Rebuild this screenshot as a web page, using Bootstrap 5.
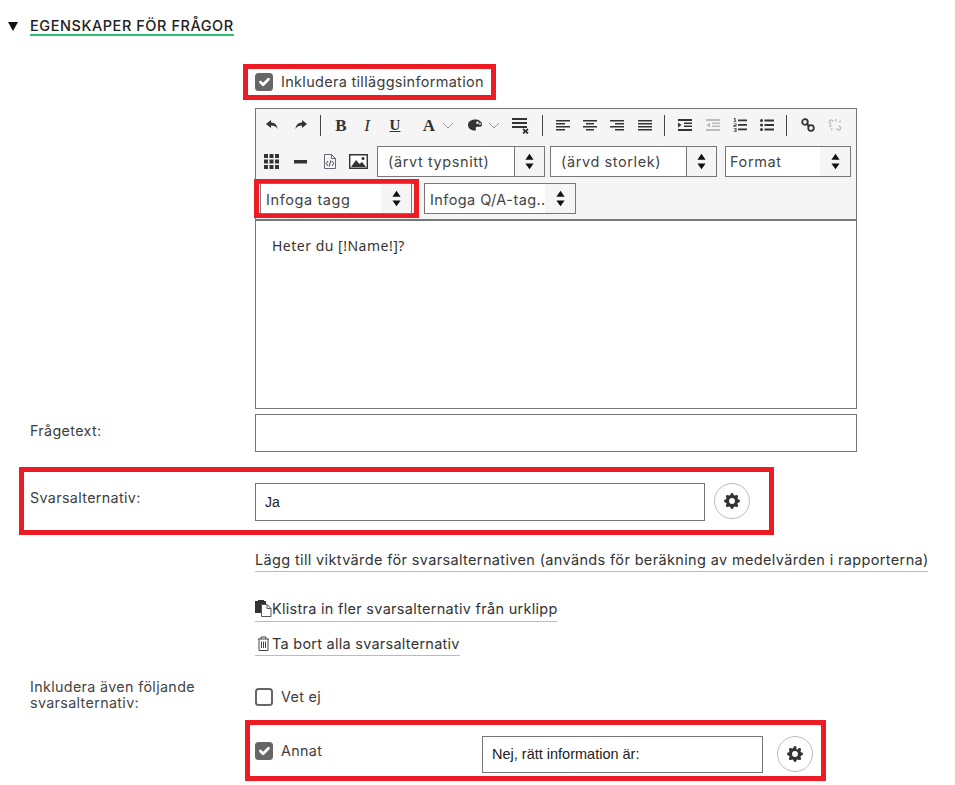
<!doctype html>
<html lang="sv">
<head>
<meta charset="utf-8">
<title>Egenskaper för frågor</title>
<link href="https://cdn.jsdelivr.net/npm/bootstrap@5.3.0/dist/css/bootstrap.min.css" rel="stylesheet">
<style>
body{font-family:Inter,"Noto Sans","Liberation Sans",sans-serif;font-size:14.3px;letter-spacing:.35px;color:#3d3d3d;background:#fff;margin:0;overflow:hidden}
.pg{width:955px;height:785px;position:relative}
.hd{padding:19px 0 0 8px;height:64px}
.tri{width:0;height:0;border-left:5px solid transparent;border-right:5px solid transparent;border-top:9px solid #111;margin:3px 12px 0 0}
.hd-t{font-size:14.5px;font-weight:500;color:#222;border-bottom:2px solid #2fbf71;line-height:14px;height:17px;letter-spacing:.55px}
.fr{border:5px solid #ed1c24}
.f1{margin-left:243px;width:253px;height:36px;padding-left:7px}
.f1 .txl{font-size:14.5px;letter-spacing:.3px}
.ck{width:18px;height:18px;margin:0 8px 0 0!important;border:2px solid #666;border-radius:2px;flex:none;background-size:18px}
.ck:checked{background-color:#666;border-color:#666}
.ck:focus{box-shadow:none;border-color:#666}
.edw{margin:8px 0 0 255px;width:602px}
.tbar{height:112px;border:1px solid #777;background:#f5f5f5}
.tr1{height:32px;padding-left:1px}
.ti{width:27.4px;height:30px;flex:none}
.ti.wd{width:29px}
.ti.n{width:26px}
.ti.u2{margin-left:2px}
.ti.c{width:12px}
.tsep{width:1px;height:21px;background:#444;margin:0 7px 0 5px;flex:none}
.tsep.ts2{margin:0 6px 0 8px}
.tg{font-family:"Liberation Serif",serif;font-size:17px;font-weight:700;color:#333;line-height:1;letter-spacing:0}
.tgi{font-style:italic;font-weight:400}
.tgu{text-decoration:underline;font-size:15px}
.tr2{height:41px;padding-left:1px}
.sel{height:31px;border:1px solid #777;background:#fff;font-size:14.5px;color:#444;letter-spacing:.6px;font-weight:400}
.sel .tx{padding-left:10px;flex:1 1 auto;white-space:nowrap;overflow:hidden}
.sel .tx.tag{padding-left:5px;padding-top:2px}
.arr{width:30px;height:100%;background:#f5f5f5;flex:none}
.arr.dv{border-left:1px solid #777}
.s1{width:168px;margin-left:4px}
.s2{width:167px;margin-left:5px}
.s3{width:126px;margin-left:8px}
.s4{width:152px;flex:none}
.s5{width:152px;margin-left:5px;letter-spacing:.42px}
.s4f{width:165px;height:39px;padding:3px 1px;margin:-3px 0 0 -2px}
.s5b{margin-top:-3px}
.edt{height:189px;border:1px solid #777;padding:14px 16px;font-size:14px;letter-spacing:.5px;color:#333;font-family:"Noto Sans","Liberation Sans",sans-serif}
.rw{display:flex}
.lb{width:255px;padding-left:30px;flex:none}
.inp{height:38px;border:1px solid #777;background:#fff;font-family:"Liberation Sans",sans-serif;font-size:14px;letter-spacing:0;color:#222;padding:0 9px;border-radius:0}
.r-q{margin-top:5px;height:38px}
.r-q .lb{padding-top:6px}
.r-q .inp{width:602px}
.f2{margin:15px 0 0 19px;width:755px;height:68px;padding-top:11px}
.f2 .lb{width:231px;padding-left:6px;padding-top:4px}
.f2 .inp{width:450px}
.gb{width:36px;height:36px;border:1px solid #bbb;border-radius:50%;background:#fff;margin-left:9px;flex:none}
.lnk{margin-left:255px;font-size:14.5px;font-weight:400;color:#333;border-bottom:1px solid #bbb;line-height:18px;white-space:nowrap;display:flex;align-items:center;letter-spacing:.355px}
.lnk svg{flex:none}
.l1{margin-top:16px;width:673px;height:21px;padding-bottom:2px}
.l2{margin-top:26px;width:302px;height:24px;padding-bottom:2px;letter-spacing:.28px}
.l3{margin-top:11px;width:205px;height:23px;padding-bottom:1px;letter-spacing:.25px}
.r-v{margin-top:23px;height:41px}
.r-v .lb{line-height:16px;color:#444}
.r-v .cw{padding-top:9px}
.f3{margin:0 0 0 245px;width:581px;height:61px;padding:0 0 0 5px}
.ann{width:227px}
.f3 .inp{width:281px;height:37px;margin-top:11px;font-size:14.5px;padding:0 9px}
.f3 .gb{margin-left:14px;margin-top:11px}
.txl{line-height:18px}
</style>
</head>
<body>
<div class="pg">
  <div class="hd d-flex align-items-start">
    <span class="tri"></span>
    <span class="hd-t">EGENSKAPER FÖR FRÅGOR</span>
  </div>

  <div class="fr f1 d-flex align-items-center">
    <input class="form-check-input ck" type="checkbox" checked aria-label="Inkludera tilläggsinformation">
    <span class="txl">Inkludera tilläggsinformation</span>
  </div>

  <div class="edw">
    <div class="tbar">
      <div class="tr1 d-flex align-items-center">
        <span class="ti wd d-flex align-items-center justify-content-center"><svg width="14" height="12" viewBox="0 0 14 12"><path d="M6 1 1 5l5 4V6.500c3 0 5 .8 6.500 3.500C12 6 10 3.600 6 3.500z" fill="#333"/></svg></span>
        <span class="ti wd d-flex align-items-center justify-content-center"><svg width="14" height="12" viewBox="0 0 14 12"><path d="M8 1l5 4-5 4V6.500C5 6.500 3 7.300 1.500 10 2 6 4 3.600 8 3.500z" fill="#333"/></svg></span>
        <span class="tsep"></span>
        <span class="ti n tg d-flex align-items-center justify-content-center">B</span>
        <span class="ti n tg tgi d-flex align-items-center justify-content-center">I</span>
        <span class="ti n u2 tg tgu d-flex align-items-center justify-content-center">U</span>
        <span class="ti n tg ms-2 d-flex align-items-center justify-content-center">A</span>
        <span class="ti c d-flex align-items-center justify-content-center"><svg width="12" height="7" viewBox="0 0 12 7"><path d="M1 1l5 5 5-5" fill="none" stroke="#999"/></svg></span>
        <span class="ti n ms-2 d-flex align-items-center justify-content-center"><svg width="14" height="12" viewBox="0 0 14 12"><path d="M7 .5C3 .5 0 2.800 0 6s3 5.500 6.500 5.500c1.500 0 1.800-.9 1.300-1.800-.5-1 .1-2 1.300-2H12c1.300 0 2-.8 2-2C14 2.500 11 .5 7 .5z" fill="#333"/><circle cx="9.500" cy="3.800" r="1.300" fill="#f5f5f5"/><circle cx="12" cy="5" r=".9" fill="#f5f5f5"/></svg></span>
        <span class="ti c d-flex align-items-center justify-content-center"><svg width="12" height="7" viewBox="0 0 12 7"><path d="M1 1l5 5 5-5" fill="none" stroke="#999"/></svg></span>
        <span class="ti n ms-2 d-flex align-items-center justify-content-center"><svg width="18" height="18" viewBox="0 0 18 18"><path d="M0 2h15v2H0zM0 6h15v2H0zM0 10h15v2H0z" fill="#333"/><path d="M11 13l5 4.500M16 13l-5 4.500" stroke="#333" stroke-width="1.700"/></svg></span>
        <span class="tsep ts2"></span>
        <span class="ti d-flex align-items-center justify-content-center"><svg width="14" height="11" viewBox="0 0 14 11"><path d="M0 0h14v1.600H0zM0 3h9v1.600H0zM0 6h14v1.600H0zM0 9h9v1.600H0z" fill="#333"/></svg></span>
        <span class="ti d-flex align-items-center justify-content-center"><svg width="14" height="11" viewBox="0 0 14 11"><path d="M0 0h14v1.600H0zM3 3h8v1.600H3zM0 6h14v1.600H0zM3 9h8v1.600H3z" fill="#333"/></svg></span>
        <span class="ti d-flex align-items-center justify-content-center"><svg width="14" height="11" viewBox="0 0 14 11"><path d="M0 0h14v1.600H0zM5 3h9v1.600H5zM0 6h14v1.600H0zM5 9h9v1.600H5z" fill="#333"/></svg></span>
        <span class="ti d-flex align-items-center justify-content-center"><svg width="14" height="11" viewBox="0 0 14 11"><path d="M0 0h14v1.600H0zM0 3h14v1.600H0zM0 6h14v1.600H0zM0 9h14v1.600H0z" fill="#333"/></svg></span>
        <span class="tsep"></span>
        <span class="ti d-flex align-items-center justify-content-center"><svg width="14" height="12" viewBox="0 0 14 12"><path d="M0 0h14v2H0zM6 3.500h8v1.600H6zM6 6.500h8v1.600H6zM0 10h14v2H0zM0 3.500l3.500 2.500L0 8.500z" fill="#333"/></svg></span>
        <span class="ti d-flex align-items-center justify-content-center"><svg width="14" height="12" viewBox="0 0 14 12"><path d="M0 0h14v2H0zM6 3.500h8v1.600H6zM6 6.500h8v1.600H6zM0 10h14v2H0zM4 3.500L.5 6 4 8.500z" fill="#bbb"/></svg></span>
        <span class="ti d-flex align-items-center justify-content-center"><svg width="14" height="14" viewBox="0 0 14 14"><path d="M5 1.500h9v1.800H5zM5 6h9v1.800H5zM5 10.500h9v1.800H5zM1 0h1.500v3.500H3.500v.6h-3v-.6H1.500V1H1zM.5 5.500h3v2.200H1.500v.8h2v.6h-3V7h2v-.9h-2zM.5 10h3v4h-3v-.6h2v-1.100h-1.500v-.6h1.500v-1.100h-2z" fill="#333"/></svg></span>
        <span class="ti d-flex align-items-center justify-content-center"><svg width="14" height="12" viewBox="0 0 14 12"><circle cx="1.500" cy="1.500" r="1.500" fill="#333"/><circle cx="1.500" cy="6" r="1.500" fill="#333"/><circle cx="1.500" cy="10.500" r="1.500" fill="#333"/><path d="M4.500.6H14v1.800H4.500zM4.500 5.100H14v1.800H4.500zM4.500 9.600H14v1.800H4.500z" fill="#333"/></svg></span>
        <span class="tsep"></span>
        <span class="ti d-flex align-items-center justify-content-center"><svg width="14" height="14" viewBox="0 0 14 14"><circle cx="4" cy="4" r="2.800" fill="none" stroke="#333" stroke-width="1.800"/><circle cx="10" cy="10" r="2.800" fill="none" stroke="#333" stroke-width="1.800"/><path d="M5.500 5.500l3 3" stroke="#333" stroke-width="1.800"/></svg></span>
        <span class="ti d-flex align-items-center justify-content-center"><svg width="14" height="14" viewBox="0 0 14 14"><path d="M5.500 3.500L4 2a2 2 0 0 0-2.500 2.500L3 6.500M8.500 10.500L10 12a2 2 0 0 0 2.500-2.500L11 7.500M8 1v2.500M1 8h2.500M11 4l2-1M3 12l1.500-1.500" fill="none" stroke="#bbb" stroke-width="1.300"/></svg></span>
      </div>
      <div class="tr2 d-flex align-items-center">
        <span class="ti wd d-flex align-items-center justify-content-center"><svg width="15" height="15" viewBox="0 0 15 15"><path d="M0 0h4v4H0zM5.500 0h4v4h-4zM11 0h4v4h-4zM0 5.500h4v4H0zM5.500 5.500h4v4h-4zM11 5.500h4v4h-4zM0 11h4v4H0zM5.500 11h4v4h-4zM11 11h4v4h-4z" fill="#333"/></svg></span>
        <span class="ti wd d-flex align-items-center justify-content-center"><svg width="13" height="4" viewBox="0 0 13 4"><path d="M0 0h13v3.500H0z" fill="#333"/></svg></span>
        <span class="ti wd d-flex align-items-center justify-content-center"><svg width="12" height="15" viewBox="0 0 12 15"><path d="M.5.500h7l4 4v10H.5zM7.500.5v4h4" fill="none" stroke="#667" stroke-width="1"/><path d="M4 7L2.300 9.500 4 12M8 7l1.700 2.500L8 12M6.800 6.500L5.200 12.500" fill="none" stroke="#445" stroke-width="1"/></svg></span>
        <span class="ti wd d-flex align-items-center justify-content-center"><svg width="19" height="15" viewBox="0 0 19 15"><path d="M.7.700h17.600v13.600H.7z" fill="#fff" stroke="#333" stroke-width="1.400"/><path d="M2 13l5-7 3.500 4 2.500-2 4 5z" fill="#333"/><circle cx="14" cy="4.500" r="1.500" fill="#333"/></svg></span>
        <div class="sel s1 d-flex align-items-center"><span class="tx">(ärvt typsnitt)</span><span class="arr dv d-flex align-items-center justify-content-center"><svg width="9" height="17" viewBox="0 0 11 19"><path d="M5.500 0l5 7.500H.5zM5.500 19l-5-7h10z" fill="#111"/></svg></span></div>
        <div class="sel s2 d-flex align-items-center"><span class="tx">(ärvd storlek)</span><span class="arr dv d-flex align-items-center justify-content-center"><svg width="9" height="17" viewBox="0 0 11 19"><path d="M5.500 0l5 7.500H.5zM5.500 19l-5-7h10z" fill="#111"/></svg></span></div>
        <div class="sel s3 d-flex align-items-center"><span class="tx ps-1">Format</span><span class="arr d-flex align-items-center justify-content-center"><svg width="9" height="17" viewBox="0 0 11 19"><path d="M5.500 0l5 7.500H.5zM5.500 19l-5-7h10z" fill="#111"/></svg></span></div>
      </div>
      <div class="d-flex align-items-center">
        <div class="fr s4f d-flex align-items-center">
          <div class="sel s4 d-flex align-items-center"><span class="tx tag">Infoga tagg</span><span class="arr d-flex align-items-center justify-content-center"><svg width="9" height="17" viewBox="0 0 11 19"><path d="M5.500 0l5 7.500H.5zM5.500 19l-5-7h10z" fill="#111"/></svg></span></div>
        </div>
        <div class="sel s5 s5b d-flex align-items-center"><span class="tx tag">Infoga Q/A-tag..</span><span class="arr d-flex align-items-center justify-content-center"><svg width="9" height="17" viewBox="0 0 11 19"><path d="M5.500 0l5 7.500H.5zM5.500 19l-5-7h10z" fill="#111"/></svg></span></div>
      </div>
    </div>
    <div class="edt">Heter du [!Name!]?</div>
  </div>

  <div class="rw r-q">
    <div class="lb">Frågetext:</div>
    <div class="inp"></div>
  </div>

  <div class="fr f2 rw">
    <div class="lb">Svarsalternativ:</div>
    <div class="inp d-flex align-items-center">Ja</div>
    <span class="gb d-flex align-items-center justify-content-center"><svg width="16" height="16" viewBox="0 0 16 16"><path fill="#333" d="M9.405 1.05c-.413-1.4-2.397-1.4-2.81 0l-.1.34a1.464 1.464 0 0 1-2.105.872l-.31-.17c-1.283-.698-2.686.705-1.987 1.987l.169.311c.446.82.023 1.841-.872 2.105l-.34.1c-1.4.413-1.4 2.397 0 2.81l.34.1a1.464 1.464 0 0 1 .872 2.105l-.17.31c-.698 1.283.705 2.686 1.987 1.987l.311-.169a1.464 1.464 0 0 1 2.105.872l.1.34c.413 1.4 2.397 1.4 2.81 0l.1-.34a1.464 1.464 0 0 1 2.105-.872l.31.17c1.283.698 2.686-.705 1.987-1.987l-.169-.311a1.464 1.464 0 0 1 .872-2.105l.34-.1c1.4-.413 1.4-2.397 0-2.81l-.34-.1a1.464 1.464 0 0 1-.872-2.105l.17-.31c.698-1.283-.705-2.686-1.987-1.987l-.311.169a1.464 1.464 0 0 1-2.105-.872l-.1-.34zM8 10.930a2.929 2.929 0 1 1 0-5.858 2.929 2.929 0 0 1 0 5.858z"/></svg></span>
  </div>

  <div class="lnk l1">Lägg till viktvärde för svarsalternativen (används för beräkning av medelvärden i rapporterna)</div>
  <div class="lnk l2"><svg width="17" height="17" viewBox="0 0 17 17"><path d="M0 1h3V0h6v1h2v4H7v8H0z" fill="#333"/><path d="M6.500 4.500H12l4 4v8H6.500z" fill="#fff" stroke="#555"/><path d="M12 4.500v4h4" fill="none" stroke="#555"/></svg>Klistra in fler svarsalternativ från urklipp</div>
  <div class="lnk l3"><svg width="17" height="15" viewBox="0 0 17 15"><path d="M3 3h11M6 3V1h5v2M4 3v11.500h9V3M6.500 5.500v6.500M8.500 5.500v6.500M10.500 5.500v6.500" fill="none" stroke="#444"/></svg>Ta bort alla svarsalternativ</div>

  <div class="rw r-v">
    <div class="lb">Inkludera även följande<br>svarsalternativ:</div>
    <div class="cw d-flex align-items-start">
      <input class="form-check-input ck" type="checkbox" aria-label="Vet ej">
      <span class="txl">Vet ej</span>
    </div>
  </div>

  <div class="fr f3 d-flex align-items-start">
    <div class="ann d-flex align-items-center h-100">
      <input class="form-check-input ck" type="checkbox" checked aria-label="Annat">
      <span class="txl">Annat</span>
    </div>
    <div class="inp d-flex align-items-center">Nej, rätt information är:</div>
    <span class="gb d-flex align-items-center justify-content-center"><svg width="16" height="16" viewBox="0 0 16 16"><path fill="#333" d="M9.405 1.05c-.413-1.4-2.397-1.4-2.81 0l-.1.34a1.464 1.464 0 0 1-2.105.872l-.31-.17c-1.283-.698-2.686.705-1.987 1.987l.169.311c.446.82.023 1.841-.872 2.105l-.34.1c-1.4.413-1.4 2.397 0 2.81l.34.1a1.464 1.464 0 0 1 .872 2.105l-.17.31c-.698 1.283.705 2.686 1.987 1.987l.311-.169a1.464 1.464 0 0 1 2.105.872l.1.34c.413 1.4 2.397 1.4 2.81 0l.1-.34a1.464 1.464 0 0 1 2.105-.872l.31.17c1.283.698 2.686-.705 1.987-1.987l-.169-.311a1.464 1.464 0 0 1 .872-2.105l.34-.1c1.4-.413 1.4-2.397 0-2.81l-.34-.1a1.464 1.464 0 0 1-.872-2.105l.17-.31c.698-1.283-.705-2.686-1.987-1.987l-.311.169a1.464 1.464 0 0 1-2.105.872l-.1-.34zM8 10.930a2.929 2.929 0 1 1 0-5.858 2.929 2.929 0 0 1 0 5.858z"/></svg></span>
  </div>
</div>
<script src="https://cdn.jsdelivr.net/npm/bootstrap@5.3.0/dist/js/bootstrap.bundle.min.js"></script>
</body>
</html>
